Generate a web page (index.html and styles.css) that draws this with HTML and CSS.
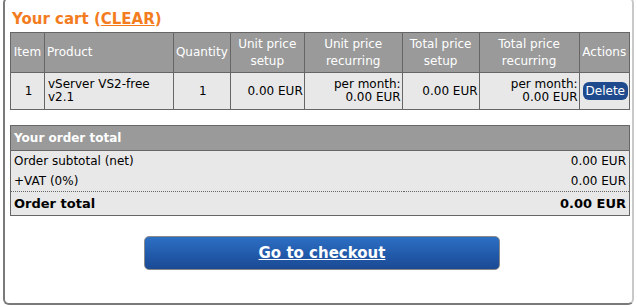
FILE: index.html
```html
<!DOCTYPE html>
<html lang="en">
<head>
    <meta charset="UTF-8">
    <title>Your cart</title>
    <link rel="stylesheet" href="styles.css">
</head>
<body>
    <div class="frame">
        <h2 class="cart-title">Your cart (<a href="#">CLEAR</a>)</h2>

        <table class="cart">
            <tr>
                <th class="c-item">Item</th>
                <th class="c-product left">Product</th>
                <th class="c-qty">Quantity</th>
                <th class="c-ups">Unit price setup</th>
                <th class="c-upr">Unit price recurring</th>
                <th class="c-tps">Total price setup</th>
                <th class="c-tpr">Total price recurring</th>
                <th class="c-act">Actions</th>
            </tr>
            <tr>
                <td class="center">1</td>
                <td class="left">vServer VS2-free v2.1</td>
                <td class="center">1</td>
                <td class="right">0.00 EUR</td>
                <td class="right">per month:<br>0.00 EUR</td>
                <td class="right">0.00 EUR</td>
                <td class="right">per month:<br>0.00 EUR</td>
                <td class="center"><button class="delete">Delete</button></td>
            </tr>
        </table>

        <table class="totals">
            <tr>
                <th colspan="2">Your order total</th>
            </tr>
            <tr>
                <td>Order subtotal (net)</td>
                <td class="right">0.00 EUR</td>
            </tr>
            <tr class="vat">
                <td>+VAT (0%)</td>
                <td class="right">0.00 EUR</td>
            </tr>
            <tr class="grand">
                <td>Order total</td>
                <td class="right">0.00 EUR</td>
            </tr>
        </table>

        <div class="checkout">
            <a href="#" class="checkout-btn">Go to checkout</a>
        </div>
    </div>
</body>
</html>
```

FILE: styles.css
```css
body {
    margin: 0;
    background-color: #fff;
    font-family: "DejaVu Sans", Verdana, sans-serif;
    font-size: 12px;
    color: #000;
}

.frame {
    margin: -3px 3px 0 3px;
    height: 304px;
    padding: 0 2px 0 5px;
    border: 2px solid #7a7a7a;
    border-right-color: #c8c8c8;
    border-radius: 6px;
    background-color: #fff;
}

.cart-title {
    margin: 0;
    padding: 11px 0 0 2px;
    height: 22px;
    font-size: 15px;
    font-weight: bold;
    color: #f27c1e;
}

.cart-title a {
    color: #f27c1e;
}

table {
    width: 100%;
    border-collapse: collapse;
}

/* cart table */
.cart th,
.cart td {
    border: 1px solid #666;
}

.cart th {
    height: 39px;
    padding: 0 2px;
    background-color: #9a9a9a;
    color: #fff;
    font-weight: normal;
    line-height: 17px;
}

.cart td {
    height: 36px;
    padding: 0 1px 0 3px;
    background-color: #e8e8e8;
    line-height: 13px;
}

.c-item { width: 29px; }
.c-product { width: 124px; }
.c-qty { width: 52px; }
.c-ups { width: 69px; }
.c-upr { width: 93px; }
.c-tps { width: 72px; }
.c-tpr { width: 95px; }

.left { text-align: left; }
.center { text-align: center; }
.right { text-align: right; }

.delete {
    padding: 2px 3px;
    border: none;
    border-radius: 6px;
    background-color: #1f4b8e;
    color: #fff;
    font-family: inherit;
    font-size: 12px;
    cursor: pointer;
}

/* totals table */
.totals {
    margin-top: 15px;
    border: 1px solid #666;
}

.totals th {
    height: 24px;
    padding: 0 3px;
    background-color: #9a9a9a;
    color: #fff;
    text-align: left;
    border-bottom: 1px solid #666;
}

.totals td {
    height: 20px;
    padding: 0 3px;
    background-color: #e8e8e8;
}

.totals .vat td {
    border-bottom: 1px dotted #666;
}

.totals .grand td {
    height: 23px;
    font-weight: bold;
    font-size: 13px;
}

.checkout {
    display: flex;
    justify-content: center;
    padding: 20px 0 0 4px;
}

.checkout-btn {
    width: 354px;
    height: 32px;
    line-height: 32px;
    text-align: center;
    border: 1px solid #8a8a8a;
    border-radius: 5px;
    background: linear-gradient(#2d6fc4, #2158a8 60%, #1b4a93);
    color: #fff;
    font-size: 15px;
    font-weight: bold;
}
```
